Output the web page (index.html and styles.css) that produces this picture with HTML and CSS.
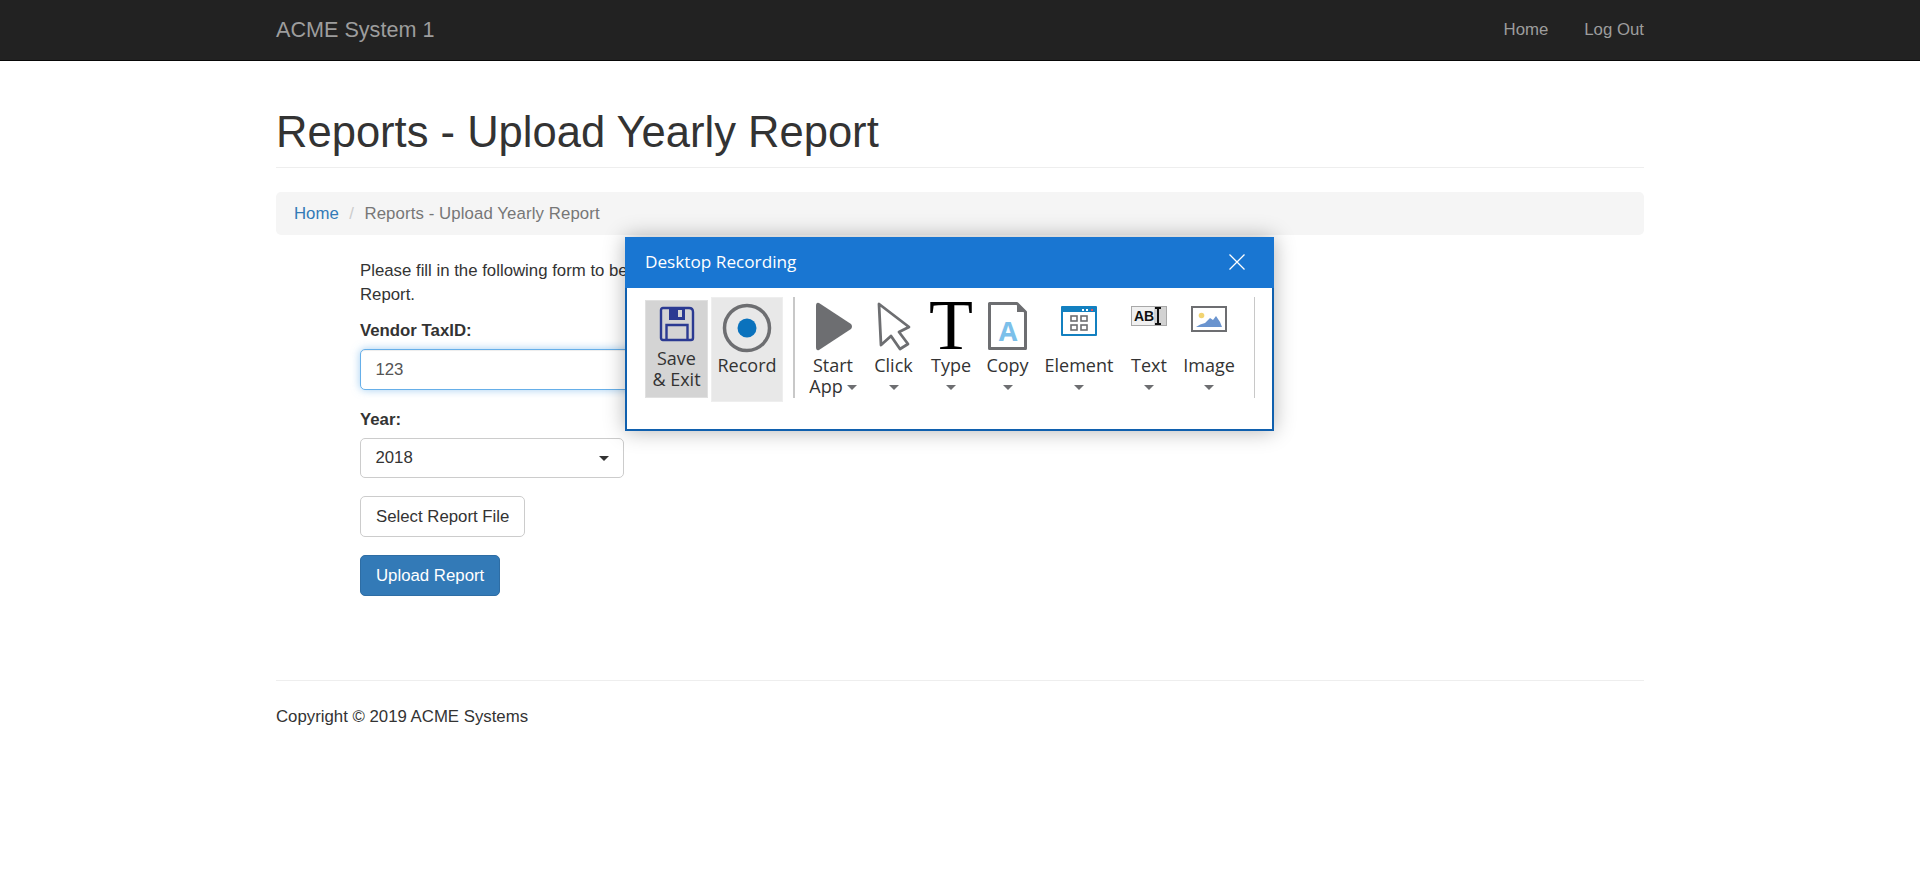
FILE: index.html
```html
<!DOCTYPE html>
<html lang="en">

<head>
  <meta charset="UTF-8">
  <title>Reports - Upload Yearly Report</title>
  <link rel="stylesheet" href="styles.css">
</head>

<body>
  <nav class="navbar">
    <div class="container navbar-inner">
      <a class="brand" href="#">ACME System 1</a>
      <div class="nav-links">
        <a href="#">Home</a>
        <a href="#">Log Out</a>
      </div>
    </div>
  </nav>

  <div class="container">
    <div class="page-header">
      <h1>Reports - Upload Yearly Report</h1>
    </div>

    <ol class="breadcrumb">
      <li><a href="#">Home</a></li>
      <li class="divider">/</li>
      <li class="active">Reports - Upload Yearly Report</li>
    </ol>

    <form class="report-form">
      <p class="intro">Please fill in the following form to begin uploading your Yearly Report.</p>

      <div class="form-group">
        <label for="taxId">Vendor TaxID:</label>
        <input class="form-control focused" id="taxId" type="text" value="123">
      </div>

      <div class="form-group">
        <label>Year:</label>
        <button class="year-select" type="button"><span>2018</span><span class="caret"></span></button>
      </div>

      <div class="form-group">
        <button class="btn" type="button">Select Report File</button>
      </div>

      <div class="form-group">
        <button class="btn btn-primary" type="button">Upload Report</button>
      </div>
    </form>

    <hr>
    <footer>Copyright © 2019 ACME Systems</footer>
  </div>

  <div class="recorder">
    <div class="recorder-title">
      <span>Desktop Recording</span>
      <svg class="close-icon" width="18" height="18" viewBox="0 0 18 18">
        <path d="M1.5 1.5 L16.5 16.5 M16.5 1.5 L1.5 16.5" stroke="#fff" stroke-width="1.3" fill="none" />
      </svg>
    </div>

    <div class="ribbon">
      <div class="rec-btn save-btn">
        <svg width="36" height="36" viewBox="0 0 36 36">
          <path d="M4 2 H30 Q34 2 34 6 V32 Q34 34 32 34 H4 Q2 34 2 32 V4 Q2 2 4 2 Z" fill="none" stroke="#2b3a92" stroke-width="2.4" />
          <path d="M10 2 H26 V14 H10 Z" fill="#2b3a92" />
          <rect x="19" y="4" width="4" height="7" fill="#d4d4d4" />
          <path d="M7.500 33 V19 H28.500 V33" fill="none" stroke="#2b3a92" stroke-width="2.400" />
        </svg>
        <span class="tool-label">Save<br>&amp; Exit</span>
      </div>

      <div class="rec-btn record-btn">
        <svg width="50" height="50" viewBox="0 0 50 50">
          <circle cx="25" cy="25" r="22.500" fill="none" stroke="#6d6e71" stroke-width="3.500" />
          <circle cx="25" cy="25" r="9.500" fill="#0a72bd" />
        </svg>
        <span class="tool-label">Record</span>
      </div>

      <div class="ribbon-sep"></div>

      <div class="tools">
        <div class="tool tool-start">
          <div class="tool-icon">
            <svg class="play-icon" width="37" height="49" viewBox="0 0 37 49">
              <path d="M3 1 L35 22 Q37 24.500 35 27 L3 48 Q0 49 0 45 V4 Q0 0 3 1 Z" fill="#6d6e71" />
            </svg>
          </div>
          <span class="tool-label">Start<br>App<span class="caret caret-inline"></span></span>
        </div>

        <div class="tool tool-click">
          <div class="tool-icon">
            <svg width="34" height="49" viewBox="0 0 34 49">
              <path d="M2 2 L32 25 L22 30 L31 42 L23 47 L14 34 L4 43 Z" fill="#fff" stroke="#6d6e71" stroke-width="2.800" stroke-linejoin="round" />
            </svg>
          </div>
          <span class="tool-label">Click</span>
          <span class="caret"></span>
        </div>

        <div class="tool tool-type">
          <div class="tool-icon">
            <span class="type-glyph">T</span>
          </div>
          <span class="tool-label">Type</span>
          <span class="caret"></span>
        </div>

        <div class="tool tool-copy">
          <div class="tool-icon">
            <svg width="39" height="48" viewBox="0 0 39 48">
              <path d="M1.500 1.500 H29 L37.500 10 V46.500 H1.500 Z" fill="#fff" stroke="#6d6e71" stroke-width="3" stroke-linejoin="round" />
              <path d="M29 1.500 V10 H37.500 Z" fill="#6d6e71" />
              <text class="copy-letter" x="20" y="39">A</text>
            </svg>
          </div>
          <span class="tool-label">Copy</span>
          <span class="caret"></span>
        </div>

        <div class="tool tool-element">
          <div class="tool-icon">
            <svg width="36" height="30" viewBox="0 0 36 30">
              <rect width="36" height="30" rx="1" fill="#1380c0" />
              <rect x="2" y="6" width="32" height="22" fill="#fff" />
              <rect x="21" y="3" width="2" height="2" fill="#fff" />
              <rect x="25" y="3" width="2" height="2" fill="#fff" />
              <rect x="30" y="3" width="2" height="2" fill="#e8505b" />
              <g fill="none" stroke="#6d6e71" stroke-width="1.600">
                <rect x="10" y="10" width="6" height="5" />
                <rect x="20" y="10" width="6" height="5" />
                <rect x="10" y="19" width="6" height="5" />
                <rect x="20" y="19" width="6" height="5" />
              </g>
            </svg>
          </div>
          <span class="tool-label">Element</span>
          <span class="caret"></span>
        </div>

        <div class="tool tool-text">
          <div class="tool-icon">
            <svg width="36" height="20" viewBox="0 0 36 20">
              <rect x="0.500" y="0.500" width="35" height="19" fill="#d2d2d2" stroke="#a8a8a8" />
              <rect x="1" y="1" width="22" height="18" fill="#f0f0f0" />
              <text class="abi-letters" x="3" y="15">AB</text>
              <path d="M24 2 H30 M27 2 V18 M24 18 H30" stroke="#111" stroke-width="2" fill="none" />
            </svg>
          </div>
          <span class="tool-label">Text</span>
          <span class="caret"></span>
        </div>

        <div class="tool tool-image">
          <div class="tool-icon">
            <svg width="36" height="26" viewBox="0 0 36 26">
              <rect x="1" y="1" width="34" height="24" fill="#fff" stroke="#6d6e71" stroke-width="2" />
              <circle cx="10.500" cy="9.500" r="2.800" fill="#f2d472" />
              <path d="M5 21 Q9 18 14 17 L19 12 L22 14 L25 10 L29 16 L31 21 Z" fill="#6a94cf" />
            </svg>
          </div>
          <span class="tool-label">Image</span>
          <span class="caret"></span>
        </div>
      </div>

      <div class="ribbon-sep ribbon-sep-end"></div>
    </div>
  </div>
</body>

</html>
```

FILE: styles.css
```css
* {
  box-sizing: border-box;
}

body {
  margin: 0;
  font-family: "Liberation Sans", Arial, sans-serif;
  font-size: 16.8px;
  line-height: 24px;
  color: #333;
  background-color: #fff;
}

a {
  text-decoration: none;
  color: #337ab7;
}

.container {
  width: 1404px;
  margin: 0 auto;
  padding: 0 18px;
}

.navbar {
  height: 61px;
  background-color: #222;
  border-bottom: 1px solid #080808;
}

.navbar-inner {
  display: flex;
  justify-content: space-between;
  align-items: center;
  height: 60px;
}

.brand {
  font-size: 21.6px;
  color: #9d9d9d;
}

.nav-links {
  display: flex;
  gap: 36px;
}

.nav-links a {
  color: #9d9d9d;
}

.page-header {
  margin: 48px 0 24px;
  padding-bottom: 11.800px;
  border-bottom: 1px solid #eee;
}

h1 {
  margin: 0;
  font-size: 43.55px;
  font-weight: 500;
  line-height: 46.500px;
}

.breadcrumb {
  display: flex;
  gap: 5px;
  list-style: none;
  margin: 0 0 24px;
  padding: 9.600px 18px;
  background-color: #f5f5f5;
  border-radius: 5px;
}

.breadcrumb .divider {
  padding: 0 5.500px;
  color: #ccc;
}

.breadcrumb .active {
  color: #777;
  letter-spacing: .1px;
}

.report-form {
  padding-left: 84px;
  width: 700px;
  height: 421px;
}

.intro {
  width: 500px;
  margin: 0 0 12px;
}

.form-group {
  margin-bottom: 18px;
}

label {
  display: block;
  margin-bottom: 6px;
  font-weight: bold;
}

.form-control {
  display: block;
  width: 100%;
  height: 41px;
  padding: 7px 14.400px;
  font: inherit;
  color: #555;
  border: 1px solid #ccc;
  border-radius: 5px;
}

.focused {
  border-color: #66afe9;
  outline: 0;
  box-shadow: inset 0 1px 1px rgba(0, 0, 0, .075), 0 0 8px rgba(102, 175, 233, .6);
}

.year-select {
  display: flex;
  justify-content: space-between;
  align-items: center;
  width: 264px;
  height: 40px;
  padding: 0 14.400px;
  font: inherit;
  color: #333;
  background: #fff;
  border: 1px solid #ccc;
  border-radius: 5px;
}

.year-select .caret {
  margin-top: 0;
  border-top-color: #333;
}

.btn {
  display: inline-block;
  height: 41px;
  padding: 0 15px;
  font: inherit;
  color: #333;
  background: #fff;
  border: 1px solid #ccc;
  border-radius: 5px;
}

.btn-primary {
  color: #fff;
  background-color: #337ab7;
  border-color: #2e6da4;
}

hr {
  margin: 0 0 24px;
  border: 0;
  border-top: 1px solid #eee;
}

/* recording toolbar window */
.recorder {
  position: absolute;
  left: 625px;
  top: 237px;
  width: 649px;
  height: 194px;
  background: #fff;
  border: 2px solid #1060ae;
  border-top: 0;
  box-shadow: 0 0 20px rgba(0, 0, 0, .3);
  font-family: "Open Sans", "Noto Sans", sans-serif;
}

.recorder-title {
  display: flex;
  justify-content: space-between;
  align-items: center;
  height: 51px;
  margin: 0 -2px;
  padding: 0 28px 2px 20px;
  font-size: 17.200px;
  color: #fff;
  background-color: #1976d2;
}

.ribbon {
  display: flex;
  align-items: flex-start;
  padding: 9px 0 0 18px;
}

.rec-btn {
  display: flex;
  flex-direction: column;
  align-items: center;
}

.save-btn {
  width: 63px;
  height: 98px;
  margin-top: 3px;
  padding-top: 5px;
  background-color: #d4d4d4;
  border: 1px solid #e0e0e0;
}

.record-btn {
  width: 72px;
  height: 105px;
  margin-left: 3px;
  padding-top: 5px;
  background-color: #e8e8e8;
  border: 1px solid #eee;
}

.ribbon-sep {
  width: 2px;
  height: 101px;
  margin: 0 5px 0 10px;
  background-color: #c8c8c8;
}

.ribbon-sep-end {
  width: 1px;
}

.tools {
  display: flex;
}

.tool {
  display: flex;
  flex-direction: column;
  align-items: center;
}

.tool-icon {
  display: flex;
  justify-content: center;
  align-items: flex-start;
  height: 58px;
  padding-top: 5px;
}

.play-icon {
  margin-left: 3px;
}

.tool-label {
  font-size: 18px;
  line-height: 21px;
  text-align: center;
  color: #333;
}

.save-btn .tool-label {
  margin-top: 6px;
}

.record-btn .tool-label {
  margin-top: 2px;
}

.caret {
  display: inline-block;
  width: 0;
  height: 0;
  margin-top: 9px;
  border-style: solid;
  border-width: 5px 5px 0;
  border-color: #6d6e71 transparent transparent;
}

.caret-inline {
  margin: 0 0 2px 4px;
  vertical-align: middle;
}

.tool-start {
  width: 66px;
}

.tool-click {
  width: 55px;
}

.tool-type {
  width: 60px;
}

.tool-copy {
  width: 53px;
}

.tool-element {
  width: 90px;
}

.tool-text {
  width: 50px;
}

.tool-image {
  width: 70px;
}

.tool-element .tool-icon,
.tool-text .tool-icon,
.tool-image .tool-icon {
  padding-top: 9px;
}

.type-glyph {
  margin-top: -3px;
  font-family: "Liberation Serif", serif;
  font-size: 72px;
  line-height: 52px;
  color: #000;
}

.copy-letter {
  font-family: "Open Sans", sans-serif;
  font-size: 27px;
  font-weight: bold;
  text-anchor: middle;
  fill: #7cc0ea;
}

.abi-letters {
  font-family: "Liberation Sans", sans-serif;
  font-size: 14px;
  font-weight: bold;
  fill: #111;
}
```
